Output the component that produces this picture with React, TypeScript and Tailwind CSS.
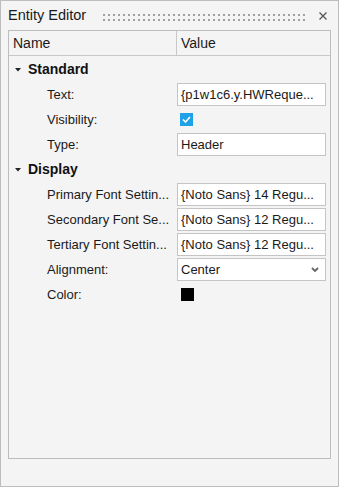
import React from 'react'

const font = { fontFamily: '"Liberation Sans", Arial, sans-serif' }

const Arrow = () => (
    <svg width="6" height="4" viewBox="0 0 6 4" className="shrink-0">
        <path d="M0 0 H6 L3 3.5 Z" fill="#222" />
    </svg>
)

const Section = ({ title }: { title: string }) => (
    <div className="flex items-center h-[25px] pl-[6px] gap-[7px]">
        <Arrow />
        <span className="font-bold text-[14px] text-[#111]">{title}</span>
    </div>
)

const Row = ({ label, children }: { label: string; children?: React.ReactNode }) => (
    <div className="flex items-center h-[25px]">
        <div className="w-[168px] pl-[38px] text-[13px] text-[#1a1a1a] whitespace-nowrap overflow-hidden">{label}</div>
        <div className="flex-1 pr-[4px] flex items-center">{children}</div>
    </div>
)

const Field = ({ value }: { value: string }) => (
    <div className="w-full h-[23px] bg-white border border-[#c4c4c4] px-[3px] flex items-center text-[13px] text-[#1a1a1a] whitespace-nowrap overflow-hidden">
        {value}
    </div>
)

const App = () => {
    return (
        <div style={font} className="w-[339px] h-[487px] bg-[#f4f4f4] border border-[#bdbdbd] flex flex-col">
            <div className="h-[29px] flex items-center pl-[7px] pr-[10px] pt-[1px]">
                <span className="text-[14.5px] text-[#1a1a1a]">Entity Editor</span>
                {/* grip dots */}
                <svg className="flex-1 ml-[17px] mr-[12px] mt-[2px]" height="7">
                    <defs>
                        <pattern id="grip" width="5" height="5" patternUnits="userSpaceOnUse">
                            <rect x="0" y="0" width="2" height="2" fill="#a0a0a0" />
                        </pattern>
                    </defs>
                    <rect x="0" y="0" width="100%" height="7" fill="url(#grip)" />
                </svg>
                <svg width="10" height="10" viewBox="0 0 10 10">
                    <path d="M1.5 1.5 L8.5 8.5 M8.5 1.5 L1.5 8.5" stroke="#555" strokeWidth="1.3" />
                </svg>
            </div>
            <div className="mx-[7px] h-[429px] border border-[#bdbdbd] flex flex-col">
                <div className="flex h-[25px] border-b border-[#c8c8c8] text-[14px] text-[#1a1a1a]">
                    <div className="w-[168px] border-r border-[#c8c8c8] pl-[4px] flex items-center">Name</div>
                    <div className="flex-1 pl-[4px] flex items-center">Value</div>
                </div>
                <div className="pt-[1px]">
                    <Section title="Standard" />
                    <Row label="Text:"><Field value="{p1w1c6.y.HWReque..." /></Row>
                    <Row label="Visibility:">
                        <div className="ml-[3px] w-[13px] h-[13px] bg-[#1ea1e6] flex items-center justify-center">
                            <svg width="9" height="7" viewBox="0 0 9 7">
                                <path d="M1 3.5 L3.5 6 L8 1" stroke="white" strokeWidth="1.6" fill="none" />
                            </svg>
                        </div>
                    </Row>
                    <Row label="Type:"><Field value="Header" /></Row>
                    <Section title="Display" />
                    <Row label="Primary Font Settin..."><Field value="{Noto Sans} 14 Regu..." /></Row>
                    <Row label="Secondary Font Se..."><Field value="{Noto Sans} 12 Regu..." /></Row>
                    <Row label="Tertiary Font Settin..."><Field value="{Noto Sans} 12 Regu..." /></Row>
                    <Row label="Alignment:">
                        <div className="w-full h-[23px] bg-white border border-[#c4c4c4] pl-[3px] pr-[6px] flex items-center justify-between text-[13px] text-[#1a1a1a]">
                            <span>Center</span>
                            <svg width="8" height="6" viewBox="0 0 8 6">
                                <path d="M1 1 L4 4 L7 1" stroke="#666" strokeWidth="1.8" fill="none" />
                            </svg>
                        </div>
                    </Row>
                    <Row label="Color:">
                        <div className="ml-[4px] w-[13px] h-[13px] bg-black"></div>
                    </Row>
                </div>
            </div>
        </div>
    )
}

export default App
